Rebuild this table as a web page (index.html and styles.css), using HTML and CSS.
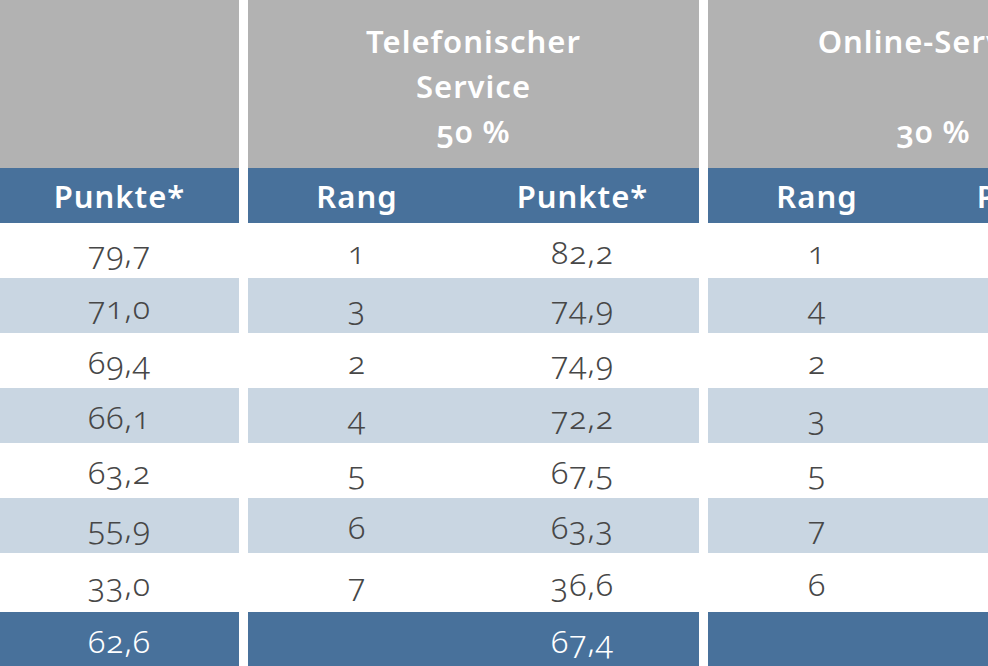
FILE: index.html
```html
<!DOCTYPE html>
<html lang="de">
<head>
<meta charset="utf-8">
<title>Service-Ranking</title>
<link rel="stylesheet" href="styles.css">
</head>
<body>
<div class="table">
  <div class="group group-first">
    <div class="head"></div>
    <div class="row sub"><div class="cell">Punkte*</div></div>
    <div class="row"><div class="cell">79,7</div></div>
    <div class="row alt"><div class="cell">71,0</div></div>
    <div class="row"><div class="cell">69,4</div></div>
    <div class="row alt"><div class="cell">66,1</div></div>
    <div class="row"><div class="cell">63,2</div></div>
    <div class="row alt"><div class="cell">55,9</div></div>
    <div class="row last"><div class="cell">33,0</div></div>
    <div class="row total"><div class="cell">62,6</div></div>
  </div>
  <div class="group">
    <div class="head">Telefonischer<br>Service<br>50 %</div>
    <div class="row sub"><div class="cell">Rang</div><div class="cell">Punkte*</div></div>
    <div class="row"><div class="cell">1</div><div class="cell">82,2</div></div>
    <div class="row alt"><div class="cell">3</div><div class="cell">74,9</div></div>
    <div class="row"><div class="cell">2</div><div class="cell">74,9</div></div>
    <div class="row alt"><div class="cell">4</div><div class="cell">72,2</div></div>
    <div class="row"><div class="cell">5</div><div class="cell">67,5</div></div>
    <div class="row alt"><div class="cell">6</div><div class="cell">63,3</div></div>
    <div class="row last"><div class="cell">7</div><div class="cell">36,6</div></div>
    <div class="row total"><div class="cell"></div><div class="cell">67,4</div></div>
  </div>
  <div class="group">
    <div class="head">Online-Service<br>&nbsp;<br>30 %</div>
    <div class="row sub"><div class="cell">Rang</div><div class="cell">Punkte*</div></div>
    <div class="row"><div class="cell">1</div><div class="cell">80,1</div></div>
    <div class="row alt"><div class="cell">4</div><div class="cell">70,3</div></div>
    <div class="row"><div class="cell">2</div><div class="cell">75,6</div></div>
    <div class="row alt"><div class="cell">3</div><div class="cell">71,8</div></div>
    <div class="row"><div class="cell">5</div><div class="cell">62,4</div></div>
    <div class="row alt"><div class="cell">7</div><div class="cell">48,2</div></div>
    <div class="row last"><div class="cell">6</div><div class="cell">52,7</div></div>
    <div class="row total"><div class="cell"></div><div class="cell">65,9</div></div>
  </div>
</div>
</body>
</html>
```

FILE: styles.css
```css
html, body {
  margin: 0;
  padding: 0;
  background: #ffffff;
  overflow: hidden;
}

body {
  width: 988px;
  height: 666px;
  font-family: "Noto Sans", "Open Sans", "DejaVu Sans", sans-serif;
  font-feature-settings: "onum" 1;
  font-variant-numeric: oldstyle-nums;
}

.table {
  display: flex;
  column-gap: 9px;
  width: max-content;
}

.group {
  display: flex;
  flex-direction: column;
  width: 451px;
}

.group-first {
  width: 239px;
}

.head {
  height: 168px;
  box-sizing: border-box;
  padding-top: 19px;
  background: #b2b2b2;
  color: #ffffff;
  font-weight: 650;
  font-size: 31px;
  letter-spacing: 1px;
  line-height: 45px;
  text-align: center;
}

.row {
  display: grid;
  grid-template-columns: 218px 233px;
  height: 55px;
  background: #ffffff;
  color: #474747;
  font-size: 32px;
  font-weight: 350;
  letter-spacing: 1px;
}

.group-first .row {
  grid-template-columns: 239px;
}

.row.alt {
  background: #c9d6e2;
}

.row.last {
  height: 59px;
}

.row.sub {
  background: #48719b;
  color: #ffffff;
  font-weight: 650;
  font-size: 31px;
}

.row.total {
  background: #48719b;
  color: #ffffff;
  height: 54px;
}

.cell {
  display: flex;
  align-items: center;
  justify-content: center;
  padding-top: 2px;
  box-sizing: border-box;
}

.row.sub .cell {
  padding-top: 0;
}
```
